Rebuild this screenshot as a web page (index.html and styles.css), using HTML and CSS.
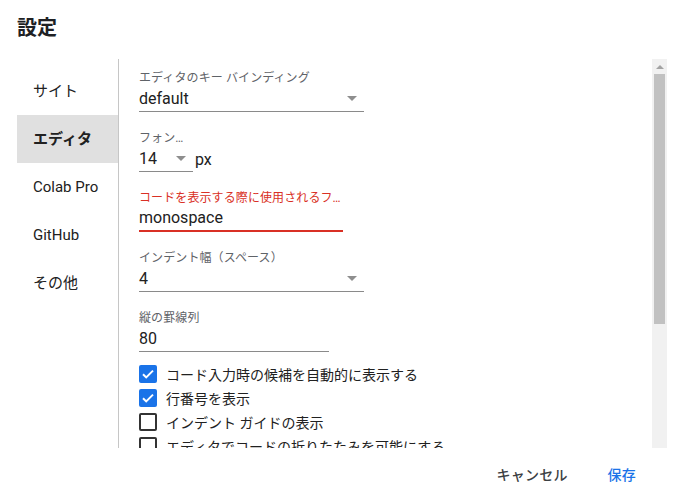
FILE: index.html
```html
<!DOCTYPE html>
<html lang="ja">
<head>
<meta charset="utf-8">
<title>設定</title>
<link rel="stylesheet" href="styles.css">
</head>
<body>
<div class="dialog">
  <div class="header">設定</div>
  <div class="main">
    <nav class="sidebar">
      <div class="nav-item">サイト</div>
      <div class="nav-item active">エディタ</div>
      <div class="nav-item">Colab Pro</div>
      <div class="nav-item">GitHub</div>
      <div class="nav-item">その他</div>
    </nav>
    <div class="content">
      <div class="scroll">
        <div class="field">
          <div class="label">エディタのキー バインディング</div>
          <div class="control w225"><span class="value">default</span><span class="arrow"></span></div>
        </div>
        <div class="field">
          <div class="label">フォン…</div>
          <div class="row">
            <div class="control w54"><span class="value">14</span><span class="arrow"></span></div>
            <span class="unit">px</span>
          </div>
        </div>
        <div class="field">
          <div class="label error">コードを表示する際に使用されるフ…</div>
          <div class="control w204 focused"><span class="value">monospace</span></div>
        </div>
        <div class="field">
          <div class="label">インデント幅（スペース）</div>
          <div class="control w225"><span class="value">4</span><span class="arrow"></span></div>
        </div>
        <div class="field last">
          <div class="label">縦の罫線列</div>
          <div class="control w190"><span class="value">80</span></div>
        </div>
        <div class="check"><span class="box checked"><svg viewBox="0 0 18 18" width="18" height="18"><path d="M4 9.2l3.2 3.2L14 5.6" fill="none" stroke="#fff" stroke-width="2"/></svg></span><span>コード入力時の候補を自動的に表示する</span></div>
        <div class="check"><span class="box checked"><svg viewBox="0 0 18 18" width="18" height="18"><path d="M4 9.2l3.2 3.2L14 5.6" fill="none" stroke="#fff" stroke-width="2"/></svg></span><span>行番号を表示</span></div>
        <div class="check"><span class="box"></span><span>インデント ガイドの表示</span></div>
        <div class="check"><span class="box"></span><span>エディタでコードの折りたたみを可能にする</span></div>
      </div>
      <div class="scrollbar">
        <div class="sb-up"><span class="sb-arrow"></span></div>
        <div class="sb-thumb"></div>
      </div>
    </div>
  </div>
  <div class="footer">
    <button class="btn cancel">キャンセル</button>
    <button class="btn save">保存</button>
  </div>
</div>
</body>
</html>
```

FILE: styles.css
```css
html, body {
  margin: 0;
  padding: 0;
  background: #fff;
}
body {
  font-family: Roboto, "Noto Sans CJK JP", sans-serif;
  color: #212121;
  width: 684px;
  height: 497px;
  overflow: hidden;
}
.header {
  padding: 14px 17px 17px;
  font-size: 20px;
  line-height: 28px;
  font-weight: 700;
  color: #202124;
}
.main {
  display: flex;
  height: 389px;
  padding-right: 17px;
}
.sidebar {
  width: 101px;
  margin-left: 17px;
  border-right: 1px solid #c6c6c6;
  padding-top: 8px;
  flex-shrink: 0;
}
.nav-item {
  height: 48px;
  line-height: 48px;
  padding-left: 16px;
  font-size: 15px;
  color: #212121;
}
.nav-item.active {
  background: #e0e0e0;
  font-weight: 700;
}
.content {
  flex: 1;
  display: flex;
  overflow: hidden;
}
.scroll {
  flex: 1;
  padding: 11px 0 0 20px;
  overflow: hidden;
}
.field {
  margin-bottom: 18px;
}
.field.last {
  margin-bottom: 10px;
}
.label {
  font-size: 12px;
  line-height: 16px;
  color: #5f6368;
  letter-spacing: 0.1px;
}
.label.error {
  color: #d93025;
}
.row {
  display: flex;
  align-items: center;
}
.control {
  display: flex;
  align-items: center;
  height: 25px;
  border-bottom: 1px solid #8a8a8a;
}
.control.focused {
  height: 24px;
  border-bottom: 2px solid #d93025;
}
.w225 { width: 225px; }
.w54 { width: 54px; }
.w204 { width: 204px; }
.w190 { width: 190px; }
.value {
  flex: 1;
  font-size: 16px;
  line-height: 24px;
  color: #212121;
}
.arrow {
  width: 0;
  height: 0;
  border-left: 5px solid transparent;
  border-right: 5px solid transparent;
  border-top: 5px solid #8e8e8e;
  margin-right: 7px;
}
.unit {
  font-size: 16px;
  margin-left: 2px;
  color: #212121;
}
.check {
  display: flex;
  align-items: center;
  gap: 9px;
  height: 24px;
  font-size: 14px;
  color: #212121;
  white-space: nowrap;
}
.box {
  width: 18px;
  height: 18px;
  box-sizing: border-box;
  border: 2px solid #333;
  border-radius: 2px;
  flex-shrink: 0;
}
.box.checked {
  border: none;
  background: #1a73e8;
}
.box svg {
  display: block;
}
.scrollbar {
  width: 15px;
  background: #f1f1f1;
  flex-shrink: 0;
}
.sb-up {
  height: 15px;
  display: flex;
  align-items: center;
  justify-content: center;
}
.sb-arrow {
  width: 0;
  height: 0;
  border-left: 4px solid transparent;
  border-right: 4px solid transparent;
  border-bottom: 4px solid #a3a3a3;
}
.sb-thumb {
  margin: 0 2px;
  height: 250px;
  background: #c1c1c1;
}
.footer {
  display: flex;
  justify-content: flex-end;
  gap: 8px;
  padding: 9px 32px 0 0;
}
.btn {
  height: 36px;
  line-height: 36px;
  padding: 0 16px;
  border: none;
  background: transparent;
  font-family: Roboto, "Noto Sans CJK JP", sans-serif;
  font-size: 14px;
  font-weight: 500;
  letter-spacing: 0.2px;
}
.cancel {
  color: #3c4043;
}
.save {
  color: #1a73e8;
}
```
